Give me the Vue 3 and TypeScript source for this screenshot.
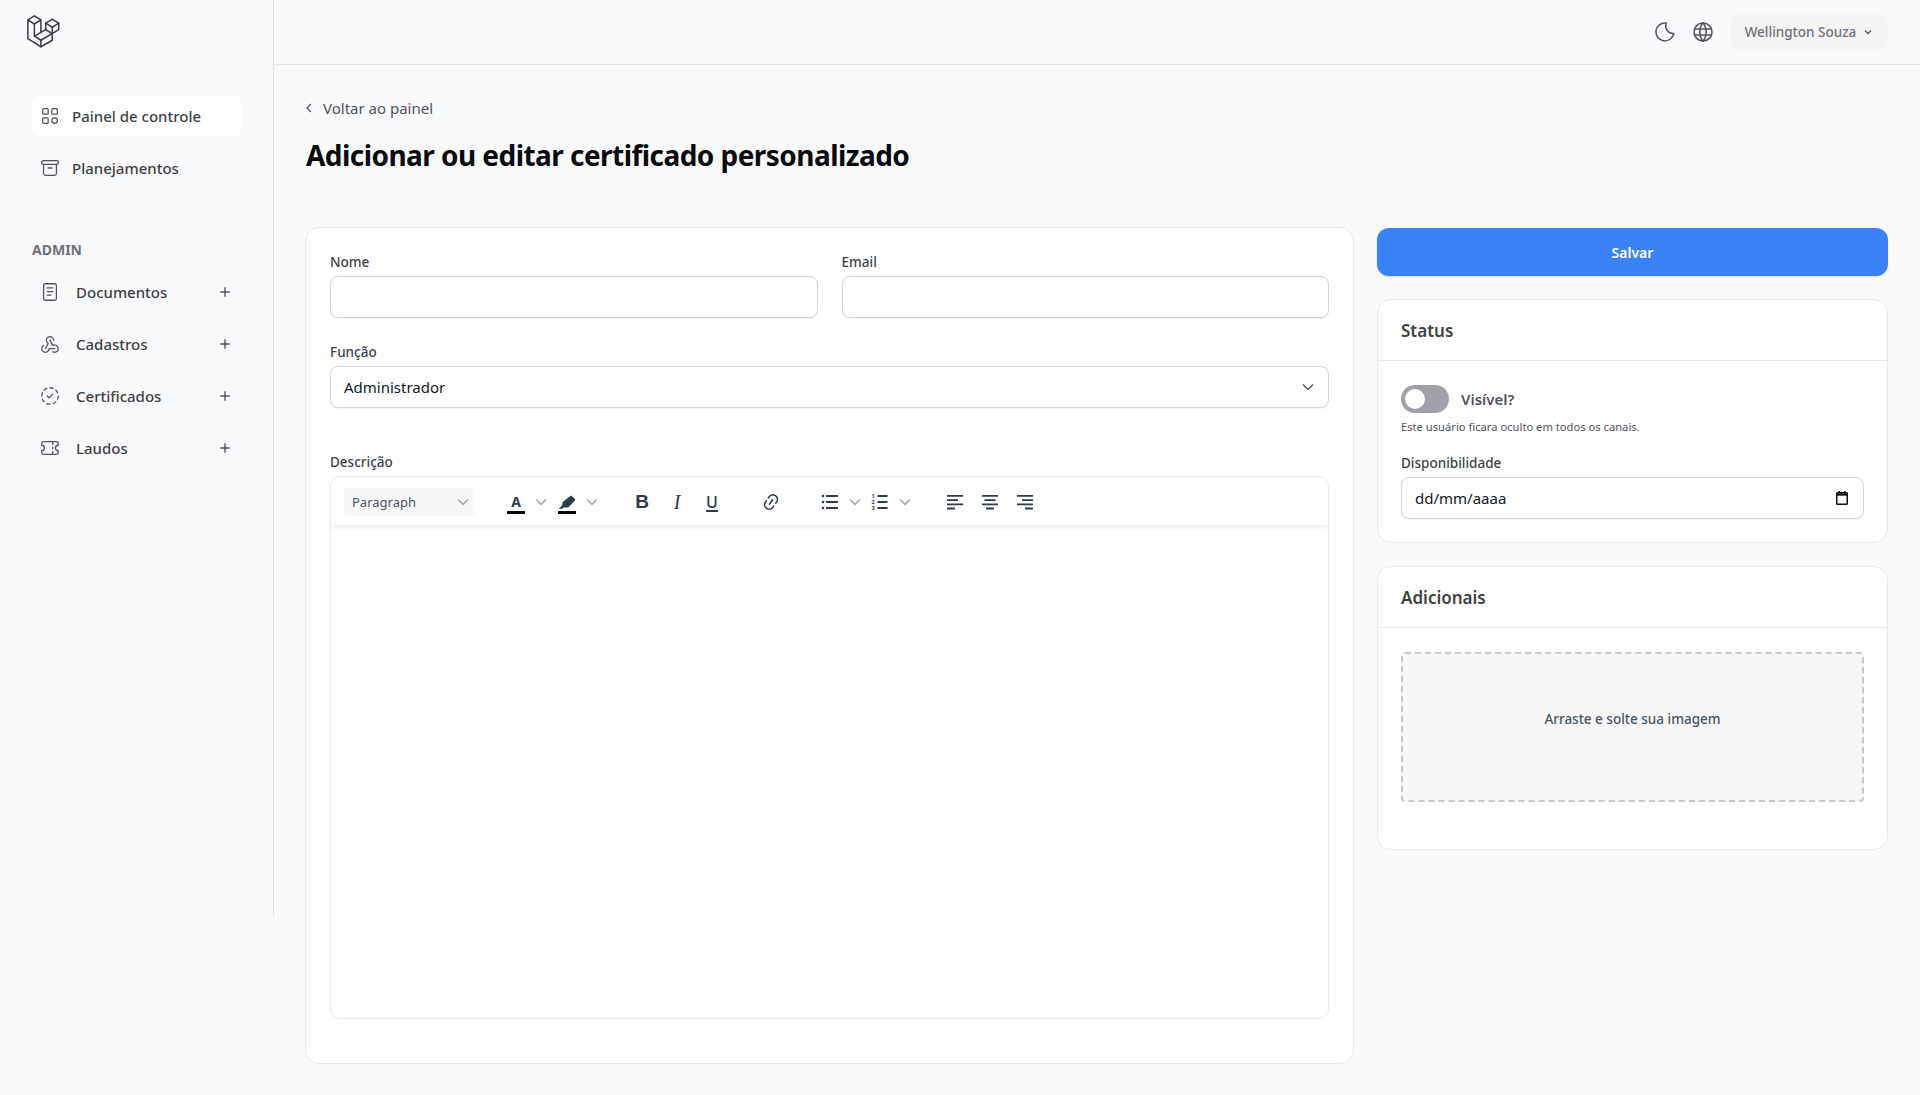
<script setup lang="ts">
interface NavItem {
  label: string
  paths: string[]
}

const adminItems: NavItem[] = [
  { label: 'Documentos', paths: ['M7 3h10a2 2 0 0 1 2 2v14a2 2 0 0 1-2 2H7a2 2 0 0 1-2-2V5a2 2 0 0 1 2-2z', 'M9 7.5h6', 'M9 11.5h6', 'M9 15.5h4'] },
  {
    label: 'Cadastros',
    paths: [
      'M4.876 13.61a4 4 0 1 0 6.124 3.39h6',
      'M15.066 20.502a4 4 0 1 0 1.934 -7.502c-.706 0 -1.424 .179 -2 .5l-3 -5.5',
      'M16 8a4 4 0 1 0 -8 0c0 1.506 .77 2.818 2 3.5l-3 5.5',
    ],
  },
  {
    label: 'Certificados',
    paths: [
      'M8.56 3.69a9 9 0 0 0 -2.92 1.95',
      'M3.69 8.56a9 9 0 0 0 -.69 3.44',
      'M3.69 15.44a9 9 0 0 0 1.95 2.92',
      'M8.56 20.31a9 9 0 0 0 3.44 .69',
      'M15.44 20.31a9 9 0 0 0 2.92 -1.95',
      'M20.31 15.44a9 9 0 0 0 .69 -3.44',
      'M20.31 8.56a9 9 0 0 0 -1.95 -2.92',
      'M15.44 3.69a9 9 0 0 0 -3.44 -.69',
      'M9 12l2 2l4 -4',
    ],
  },
  {
    label: 'Laudos',
    paths: [
      'M3 7a2 2 0 0 1 2-2h14a2 2 0 0 1 2 2v2a3 3 0 0 0 0 6v2a2 2 0 0 1-2 2H5a2 2 0 0 1-2-2v-2a3 3 0 0 0 0-6z',
      'M15 6v2',
      'M15 11v2',
      'M15 16v2',
    ],
  },
]
</script>

<template>
  <div class="app">
    <aside class="sidebar">
      <div class="logo">
        <svg width="39" height="39" viewBox="0 0 24 24" fill="none" stroke="#3f3f46" stroke-width="0.95" stroke-linejoin="round" stroke-linecap="round">
          <path d="M3 17l8 5l7 -4v-8l-4 -2.5l4 -2.5l4 2.5v4l-11 6.5l-4 -2.5v-7.5l-4 -2.5z" />
          <path d="M11 18v4" />
          <path d="M7 15.5l7 -4" />
          <path d="M14 7.5v4" />
          <path d="M14 11.5l4 2.5" />
          <path d="M11 13v-7.5l-4 -2.5l-4 2.5" />
          <path d="M7 8l4 -2.5" />
          <path d="M18 10l4 -2.5" />
        </svg>
      </div>

      <nav class="nav">
        <a class="nav-link active">
          <svg class="nav-icon" viewBox="0 0 24 24">
            <rect x="4" y="4" width="6" height="6" rx="1" />
            <rect x="14" y="4" width="6" height="6" rx="1" />
            <rect x="4" y="14" width="6" height="6" rx="1" />
            <circle cx="17" cy="17" r="3" />
          </svg>
          Painel de controle
        </a>
        <a class="nav-link">
          <svg class="nav-icon" viewBox="0 0 24 24">
            <rect x="3" y="4" width="18" height="4" rx="1.5" />
            <path d="M5 8v10a2 2 0 0 0 2 2h10a2 2 0 0 0 2-2V8" />
            <path d="M10 12h4" />
          </svg>
          Planejamentos
        </a>
      </nav>

      <div class="nav-heading">ADMIN</div>
      <nav class="admin-nav">
        <a v-for="item in adminItems" :key="item.label" class="admin-link">
          <svg class="nav-icon" viewBox="0 0 24 24">
            <path v-for="d in item.paths" :key="d" :d="d" />
          </svg>
          <span class="admin-label">{{ item.label }}</span>
          <svg class="plus" viewBox="0 0 24 24"><path d="M12 4v16M4 12h16" /></svg>
        </a>
      </nav>
    </aside>

    <div class="content">
      <header class="topbar">
        <svg class="top-icon moon" viewBox="0 0 24 24">
          <path d="M12 3c.132 0 .263 0 .393 0a7.5 7.5 0 0 0 7.37 10.5a9 9 0 1 1 -7.763 -10.5z" />
        </svg>
        <svg class="top-icon globe" viewBox="0 0 24 24">
          <path d="M3 12a9 9 0 1 0 18 0a9 9 0 0 0 -18 0" />
          <path d="M3.6 9h16.8" />
          <path d="M3.6 15h16.8" />
          <path d="M11.5 3a17 17 0 0 0 0 18" />
          <path d="M12.5 3a17 17 0 0 1 0 18" />
        </svg>
        <button class="user-btn" type="button">
          Wellington Souza
          <svg width="12" height="12" viewBox="0 0 24 24" fill="none" stroke="#52525b" stroke-width="2.5"><path d="M6 9l6 6l6 -6" /></svg>
        </button>
      </header>

      <main class="page">
        <a class="back">
          <svg width="16" height="16" viewBox="0 0 24 24" fill="none" stroke="#52525b" stroke-width="1.8"><path d="M15 6l-6 6l6 6" /></svg>
          Voltar ao painel
        </a>
        <h1 class="title">Adicionar ou editar certificado personalizado</h1>

        <div class="columns">
          <section class="card form-card">
            <div class="two-cols">
              <div>
                <label class="label">Nome</label>
                <input class="input" type="text" />
              </div>
              <div>
                <label class="label">Email</label>
                <input class="input" type="text" />
              </div>
            </div>

            <div class="field-role">
              <label class="label">Função</label>
              <div class="input select">
                <span>Administrador</span>
                <svg width="20" height="20" viewBox="0 0 24 24" fill="none" stroke="#52525b" stroke-width="1.8"><path d="M6 9l6 6l6 -6" /></svg>
              </div>
            </div>

            <div class="field-desc">
              <label class="label">Descrição</label>
              <div class="editor">
                <div class="toolbar">
                  <div class="heading-select">
                    <span>Paragraph</span>
                    <svg class="chev" viewBox="0 0 10 10"><path d="M1 3l4 4l4 -4" /></svg>
                  </div>

                  <div class="tool-group colors">
                    <span class="tool color-tool">
                      <span class="letter-a">A</span>
                      <i class="color-bar" />
                    </span>
                    <svg class="chev" viewBox="0 0 10 10"><path d="M1 3l4 4l4 -4" /></svg>
                    <span class="tool color-tool">
                      <svg class="pen" viewBox="0 0 18 14">
                        <path d="M13 .6l3.8 3.2a1.2 1.2 0 0 1 .1 1.7l-6.6 7h-4.8l-1.2 1.2H1l3.2-3.6l.4-3z" fill="#2c3a4b" />
                      </svg>
                      <i class="color-bar" />
                    </span>
                    <svg class="chev" viewBox="0 0 10 10"><path d="M1 3l4 4l4 -4" /></svg>
                  </div>

                  <div class="tool-group marks">
                    <span class="tool mark-b">B</span>
                    <span class="tool mark-i">I</span>
                    <span class="tool mark-u">U</span>
                  </div>

                  <span class="tool link-tool">
                    <svg width="20" height="20" viewBox="0 0 20 20" fill="#2c3a4b">
                      <path d="m11.077 15 .991-1.416a.75.75 0 1 1 1.229.86l-1.148 1.64a.748.748 0 0 1-.217.206 5.251 5.251 0 0 1-8.503-5.955.741.741 0 0 1 .12-.274l1.147-1.639a.75.75 0 1 1 1.228.86L4.933 10.7l.006.003a3.75 3.75 0 0 0 6.132 4.294l.006.004zm5.494-5.335a.748.748 0 0 1-.12.274l-1.147 1.639a.75.75 0 1 1-1.228-.86l.86-1.23a3.75 3.75 0 0 0-6.144-4.301l-.86 1.229a.75.75 0 0 1-1.229-.86l1.148-1.64a.748.748 0 0 1 .217-.206 5.251 5.251 0 0 1 8.503 5.955zm-4.563-2.532a.75.75 0 0 1 .184 1.045l-3.155 4.505a.75.75 0 1 1-1.229-.86l3.155-4.506a.75.75 0 0 1 1.045-.184z" />
                    </svg>
                  </span>

                  <div class="tool-group lists">
                    <span class="tool">
                      <svg width="20" height="20" viewBox="0 0 20 20" fill="#2c3a4b">
                        <circle cx="3" cy="4" r="1.3" />
                        <circle cx="3" cy="10" r="1.3" />
                        <circle cx="3" cy="16" r="1.3" />
                        <rect x="6" y="3.1" width="12" height="1.8" rx=".3" />
                        <rect x="6" y="9.1" width="12" height="1.8" rx=".3" />
                        <rect x="6" y="15.1" width="12" height="1.8" rx=".3" />
                      </svg>
                    </span>
                    <svg class="chev" viewBox="0 0 10 10"><path d="M1 3l4 4l4 -4" /></svg>
                    <span class="tool">
                      <svg width="20" height="20" viewBox="0 0 20 20" fill="#2c3a4b">
                        <text x="3" y="6" class="list-num">1</text>
                        <text x="3" y="12" class="list-num">2</text>
                        <text x="3" y="18" class="list-num">3</text>
                        <rect x="7.5" y="3.1" width="10" height="1.8" rx=".3" />
                        <rect x="7.5" y="9.1" width="10" height="1.8" rx=".3" />
                        <rect x="7.5" y="15.1" width="10" height="1.8" rx=".3" />
                      </svg>
                    </span>
                    <svg class="chev" viewBox="0 0 10 10"><path d="M1 3l4 4l4 -4" /></svg>
                  </div>

                  <div class="tool-group aligns">
                    <span class="tool">
                      <svg width="20" height="20" viewBox="0 0 20 20" fill="#2c3a4b">
                        <rect x="2" y="3" width="16" height="1.8" rx=".3" />
                        <rect x="2" y="7.2" width="11" height="1.8" rx=".3" />
                        <rect x="2" y="11.4" width="16" height="1.8" rx=".3" />
                        <rect x="2" y="15.6" width="8" height="1.8" rx=".3" />
                      </svg>
                    </span>
                    <span class="tool">
                      <svg width="20" height="20" viewBox="0 0 20 20" fill="#2c3a4b">
                        <rect x="2" y="3" width="16" height="1.8" rx=".3" />
                        <rect x="4.5" y="7.2" width="11" height="1.8" rx=".3" />
                        <rect x="2" y="11.4" width="16" height="1.8" rx=".3" />
                        <rect x="6" y="15.6" width="8" height="1.8" rx=".3" />
                      </svg>
                    </span>
                    <span class="tool">
                      <svg width="20" height="20" viewBox="0 0 20 20" fill="#2c3a4b">
                        <rect x="2" y="3" width="16" height="1.8" rx=".3" />
                        <rect x="7" y="7.2" width="11" height="1.8" rx=".3" />
                        <rect x="2" y="11.4" width="16" height="1.8" rx=".3" />
                        <rect x="10" y="15.6" width="8" height="1.8" rx=".3" />
                      </svg>
                    </span>
                  </div>
                </div>
                <div class="editor-body" />
              </div>
            </div>
          </section>

          <div class="side">
            <button class="save" type="button">Salvar</button>

            <section class="card">
              <h2 class="card-title">Status</h2>
              <div class="card-body status-body">
                <div class="toggle-row">
                  <span class="toggle"><i class="knob" /></span>
                  <span class="toggle-label">Visível?</span>
                </div>
                <p class="hint">Este usuário ficara oculto em todos os canais.</p>
                <label class="label date-label">Disponibilidade</label>
                <div class="input date">
                  <span>dd/mm/aaaa</span>
                  <svg width="16" height="16" viewBox="0 0 16 16" fill="none" stroke="#111" stroke-width="1.5">
                    <rect x="2.75" y="2.75" width="10.5" height="11.5" rx=".8" />
                    <path d="M2.5 4.5h11" stroke-width="2.4" />
                    <path d="M5.2 1v2M10.8 1v2" />
                  </svg>
                </div>
              </div>
            </section>

            <section class="card">
              <h2 class="card-title">Adicionais</h2>
              <div class="card-body extras-body">
                <div class="dropzone">Arraste e solte sua imagem</div>
              </div>
            </section>
          </div>
        </div>
      </main>
    </div>
  </div>
</template>

<style scoped>
.app {
  display: flex;
  align-items: flex-start;
  min-height: 1095px;
  font-family: 'Noto Sans', sans-serif;
  color: #3f3f46;
}

.sidebar {
  flex: 0 0 274px;
  height: 917px;
  padding: 16px 32px 0;
  box-sizing: border-box;
  border-right: 1px solid #e4e4e7;
}

.logo {
  height: 36px;
  margin: -5px 0 0 -9px;
  padding-bottom: 5px;
}

.nav {
  display: flex;
  flex-direction: column;
  gap: 12px;
  margin-top: 44px;
  width: 209px;
}

.nav-link {
  display: flex;
  align-items: center;
  gap: 11px;
  height: 40px;
  padding-left: 7px;
  border-radius: 8px;
  font-size: 15px;
  font-weight: 500;
  color: #3f3f46;
}

.nav-link.active {
  background: #fff;
}

.nav-icon {
  width: 22px;
  height: 22px;
  fill: none;
  stroke: #52525b;
  stroke-width: 1.4;
  stroke-linecap: round;
  stroke-linejoin: round;
  flex: none;
}

.nav-heading {
  margin-top: 52px;
  font-size: 14px;
  line-height: 20px;
  font-weight: 700;
  color: #71717a;
}

.admin-nav {
  display: flex;
  flex-direction: column;
  gap: 12px;
  margin-top: 12px;
  width: 209px;
}

.admin-link {
  display: flex;
  align-items: center;
  height: 40px;
  padding: 0 9px 0 7px;
  box-sizing: border-box;
  font-size: 15px;
  font-weight: 500;
}

.admin-label {
  flex: 1;
  margin-left: 15px;
}

.plus {
  width: 14px;
  height: 14px;
  fill: none;
  stroke: #52525b;
  stroke-width: 2.4;
}

.content {
  flex: 1;
  min-width: 0;
}

.topbar {
  display: flex;
  align-items: center;
  justify-content: flex-end;
  height: 65px;
  padding-right: 32px;
  box-sizing: border-box;
  border-bottom: 1px solid #e4e4e7;
}

.top-icon {
  width: 24px;
  height: 24px;
  fill: none;
  stroke: #52525b;
  stroke-width: 1.5;
  stroke-linecap: round;
  stroke-linejoin: round;
}

.globe {
  margin-left: 13px;
}

.user-btn {
  display: flex;
  align-items: center;
  justify-content: center;
  gap: 6px;
  width: 157px;
  height: 34px;
  margin-left: 16px;
  padding: 0 0 1px;
  border: 0;
  border-radius: 8px;
  background: #f4f4f5;
  font: 500 13.5px 'Noto Sans', sans-serif;
  color: #71717a;
}

.page {
  padding: 33px 32px 31px;
}

.back {
  display: flex;
  align-items: center;
  gap: 6px;
  height: 20px;
  margin-left: -5px;
  font-size: 15px;
  color: #52525b;
}

.title {
  margin: 18px 0 0;
  font-size: 28px;
  line-height: 38px;
  font-weight: 700;
  letter-spacing: -0.55px;
  color: #09090b;
}

.columns {
  display: grid;
  grid-template-columns: 1fr 511px;
  gap: 23px;
  margin: 53px 0 0 -1px;
}

.card {
  background: #fff;
  border: 1px solid #e9e9ec;
  border-radius: 14px;
}

.form-card {
  height: 837px;
  padding: 24px;
  box-sizing: border-box;
}

.two-cols {
  display: grid;
  grid-template-columns: 1fr 1fr;
  gap: 24px;
}

.label {
  display: block;
  margin-bottom: 4px;
  font-size: 13.5px;
  line-height: 20px;
  font-weight: 500;
  color: #3f3f46;
}

.input {
  display: block;
  width: 100%;
  height: 42px;
  padding: 0 13px;
  box-sizing: border-box;
  background: #fff;
  border: 1px solid #d4d4d8;
  border-radius: 8px;
  box-shadow: 0 1px 1px rgb(0 0 0 / 5%);
  font: 400 15px 'Noto Sans', sans-serif;
  color: #111827;
  outline: none;
}

.select,
.date {
  display: flex;
  align-items: center;
  justify-content: space-between;
}

.select {
  padding-right: 10px;
}

.field-role {
  margin-top: 24px;
}

.field-desc {
  margin-top: 44px;
}

.editor {
  height: 543px;
  box-sizing: border-box;
  border: 1px solid #eaeaec;
  border-radius: 10px;
  overflow: hidden;
}

.toolbar {
  display: flex;
  align-items: center;
  height: 48px;
  padding: 2px 13px 0;
  box-sizing: border-box;
  background: #fff;
  box-shadow: 0 2px 6px rgb(0 0 0 / 9%);
}

.heading-select {
  display: flex;
  align-items: center;
  justify-content: space-between;
  flex: none;
  width: 130px;
  height: 28px;
  padding: 0 5px 0 8px;
  box-sizing: border-box;
  background: #f7f7f7;
  border-radius: 4px;
  font-size: 13px;
  color: #4b5563;
}

.tool-group {
  display: flex;
  align-items: center;
  flex: none;
}

.tool {
  display: flex;
  align-items: center;
  justify-content: center;
  flex: none;
  width: 20px;
  height: 24px;
}

.chev {
  flex: none;
  width: 12px;
  height: 12px;
  fill: none;
  stroke: #9ca3af;
  stroke-width: 1.2;
}

.colors {
  margin-left: 33px;
}

.colors .chev:not(:last-child) {
  margin-right: 11px;
}

.color-tool {
  flex-direction: column;
  justify-content: flex-end;
  width: 18px;
  margin-right: 10px;
}

.letter-a {
  font-size: 14px;
  line-height: 14px;
  font-weight: 700;
  color: #2c3a4b;
}

.pen {
  width: 18px;
  height: 14px;
}

.color-bar {
  display: block;
  width: 18px;
  height: 3px;
  margin-top: 2px;
  background: #000;
}

.marks {
  gap: 15px;
  margin-left: 34px;
  color: #2c3a4b;
}

.mark-b {
  font: 700 19px 'Liberation Sans', sans-serif;
}

.mark-i {
  font: italic 400 20px 'Liberation Serif', serif;
}

.mark-u {
  font: 500 16px 'Noto Sans', sans-serif;
  text-decoration: underline;
  text-decoration-thickness: 1.5px;
  text-underline-offset: 2px;
}

.link-tool {
  margin-left: 39px;
}

.lists {
  gap: 9px;
  margin-left: 39px;
}

.list-num {
  font: 700 5.5px 'Noto Sans', sans-serif;
  text-anchor: middle;
}

.aligns {
  gap: 15px;
  margin-left: 34px;
}

.side {
  display: flex;
  flex-direction: column;
  gap: 23px;
  margin-top: 1px;
}

.save {
  height: 48px;
  border: 0;
  border-radius: 12px;
  background: #3b82f6;
  box-shadow: 0 1px 2px rgb(0 0 0 / 15%);
  font: 600 14px 'Noto Sans', sans-serif;
  color: #fff;
}

.card-title {
  margin: 0;
  height: 61px;
  padding: 0 23px;
  box-sizing: border-box;
  border-bottom: 1px solid #e9e9ec;
  font-size: 17px;
  line-height: 61px;
  font-weight: 600;
  color: #3f3f46;
}

.card-body {
  padding: 24px 23px;
}

.status-body {
  height: 181px;
  box-sizing: border-box;
}

.toggle-row {
  display: flex;
  align-items: center;
  gap: 12px;
}

.toggle {
  display: flex;
  align-items: center;
  width: 48px;
  height: 28px;
  padding-left: 4px;
  box-sizing: border-box;
  background: #a1a1aa;
  border-radius: 14px;
}

.knob {
  width: 20px;
  height: 20px;
  border-radius: 50%;
  background: #fff;
}

.toggle-label {
  font-size: 15px;
  font-weight: 600;
  color: #52525b;
}

.hint {
  margin: 6px 0 0;
  font-size: 11.2px;
  line-height: 16px;
  color: #52525b;
}

.date-label {
  margin-top: 18px;
}

.extras-body {
  height: 221px;
  box-sizing: border-box;
}

.dropzone {
  display: flex;
  align-items: center;
  justify-content: center;
  height: 150px;
  box-sizing: border-box;
  padding-bottom: 17px;
  background: #f7f7f7;
  border: 2px dashed #c9c9cc;
  border-radius: 4px;
  font-size: 13.5px;
  font-weight: 500;
  color: #4b5563;
}
</style>

<style>
body {
  background: #f9fafb;
}
</style>
